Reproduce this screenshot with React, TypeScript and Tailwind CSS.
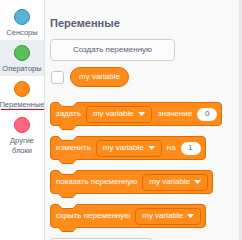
import React from "react";

const Caret = () => (
  <svg width="7" height="4" viewBox="0 0 7 4" className="ml-[4px]">
    <path d="M0 0 H7 L3.5 4 Z" fill="#ffffff" />
  </svg>
);

const Dropdown = () => (
  <div className="inline-flex items-center h-[17px] px-[6px] rounded-[4px] border border-[#db6e00] bg-[#ff8c1a] text-white">
    <span>my variable</span>
    <Caret />
  </div>
);

const Oval = ({ v }: { v: string }) => (
  <div className="inline-flex items-center justify-center h-[13px] w-[20px] rounded-full bg-white text-[#575e75] text-[8px]">
    {v}
  </div>
);

const Block = ({ children }: { children: React.ReactNode }) => (
  <div className="relative inline-flex items-center h-[24px] pl-[5px] pr-[4px] gap-[5px] bg-[#ff8c1a] border border-[#db6e00] rounded-[4px] text-white text-[8px] whitespace-nowrap">
    <svg width="20" height="5" viewBox="0 0 20 5" className="absolute top-[-1px] left-[7px]">
      <path d="M0 0 L4 4 H15 L19 0 Z" fill="#f9f9f9" />
      <path d="M0 0.5 L4 4.5 H15 L19 0.5" fill="none" stroke="#db6e00" strokeWidth="1" />
    </svg>
    <svg width="20" height="5" viewBox="0 0 20 5" className="absolute bottom-[-5px] left-[7px]">
      <path d="M0 0 L4 4 H15 L19 0 Z" fill="#ff8c1a" />
      <path d="M0 0 L4 4.5 H15 L19 0" fill="none" stroke="#db6e00" strokeWidth="1" />
    </svg>
    {children}
  </div>
);

const cats = [
  { label: ["Сенсоры"], fill: "#5cb1d6", border: "#2e8eb8" },
  { label: ["Операторы"], fill: "#59c059", border: "#389438", hl: true },
  { label: ["Переменные"], fill: "#ff8c1a", border: "#db6e00", underline: true },
  { label: ["Другие", "блоки"], fill: "#ff6680", border: "#ff3355" },
];

export default function App() {
  return (
    <div
      className="w-[242px] h-[240px] flex overflow-hidden bg-white"
      style={{ fontFamily: '"Liberation Sans", Arial, sans-serif' }}
    >
      <div className="w-[45px] shrink-0 bg-white border-r border-[#e3e3e3] flex flex-col pt-[4px] overflow-hidden">
        {cats.map((c, i) => (
          <div
            key={i}
            className={`relative h-[36px] flex flex-col items-center ${c.hl ? "bg-[#e9eef2]" : ""}`}
          >
            <div
              className="mt-[5px] w-[16px] h-[16px] rounded-full border shrink-0"
              style={{ background: c.fill, borderColor: c.border }}
            />
            <div className="mt-[3px] flex flex-col items-center text-[7.5px] leading-[10px] text-[#575e75] whitespace-nowrap">
              {c.label.map((l) => (
                <span key={l}>{l}</span>
              ))}
            </div>
            {c.underline && (
              <div className="absolute left-[1px] right-0 top-[33px] h-[1px] bg-[#ff0000]" />
            )}
          </div>
        ))}
      </div>
      <div className="flex-1 flex bg-[#f9f9f9] overflow-hidden">
        <div className="flex-1 flex flex-col items-start pl-[5px] pt-[16px] overflow-hidden">
          <div className="text-[11px] leading-[14px] font-bold text-[#575e75]">Переменные</div>
          <div className="mt-[9px] w-[125px] h-[22px] shrink-0 rounded-[4px] border border-[#d0d0d0] bg-[#fcfcfc] flex items-center justify-center text-[8px] text-[#575e75]">
            Создать переменную
          </div>
          <div className="mt-[6px] flex items-center">
            <div className="ml-[1px] w-[13px] h-[13px] rounded-[3px] border border-[#c6c6c6] bg-white" />
            <div className="ml-[6px] h-[20px] px-[8px] rounded-full bg-[#ff8c1a] border border-[#db6e00] flex items-center text-white text-[8px]">
              my variable
            </div>
          </div>
          <div className="mt-[15px] flex flex-col items-start gap-[10px]">
            <Block>
              <span>задать</span>
              <Dropdown />
              <span className="ml-[1px]">значение</span>
              <Oval v="0" />
            </Block>
            <Block>
              <span>изменить</span>
              <Dropdown />
              <span>на</span>
              <Oval v="1" />
            </Block>
            <Block>
              <span>показать переменную</span>
              <Dropdown />
            </Block>
            <Block>
              <span>скрыть переменную</span>
              <Dropdown />
            </Block>
            <div className="w-[103px] h-[22px] shrink-0 rounded-[4px] border border-[#d0d0d0] bg-[#fcfcfc]" />
          </div>
        </div>
        <div className="w-[3px] shrink-0 bg-[#e8e8e8]" />
      </div>
    </div>
  );
}
